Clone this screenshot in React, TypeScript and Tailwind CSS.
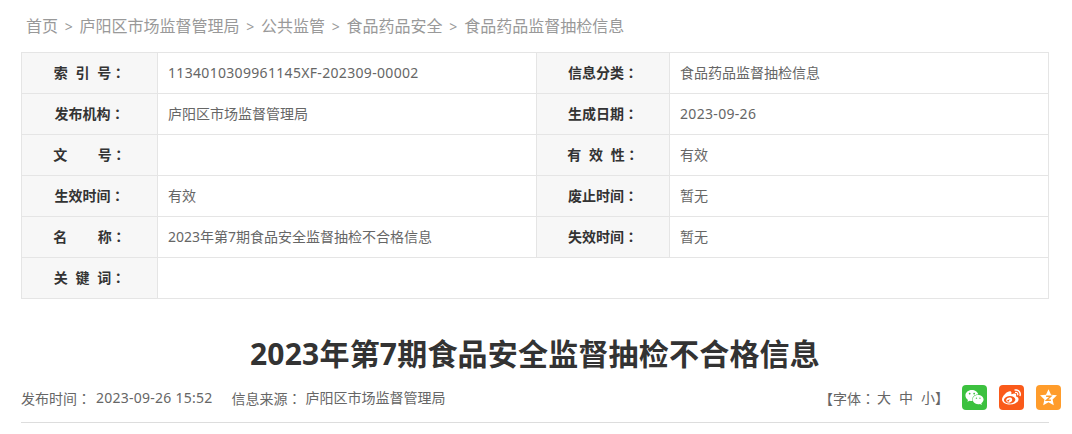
import { FaWeibo, FaWeixin } from 'react-icons/fa';

const crumbs = ['首页', '庐阳区市场监督管理局', '公共监管', '食品药品安全', '食品药品监督抽检信息'];

const rows: [string, string, string?, string?][] = [
  ['索 引 号', '1134010309961145XF-202309-00002', '信息分类', '食品药品监督抽检信息'],
  ['发布机构', '庐阳区市场监督管理局', '生成日期', '2023-09-26'],
  ['文\u00a0\u00a0\u00a0\u00a0号', '', '有 效 性', '有效'],
  ['生效时间', '有效', '废止时间', '暂无'],
  ['名\u00a0\u00a0\u00a0\u00a0称', '2023年第7期食品安全监督抽检不合格信息', '失效时间', '暂无'],
  ['关 键 词', ''],
];

function Colon() {
  return <span className="font-['Noto_Sans_CJK_TC',sans-serif]">：</span>;
}

function Label({ text }: { text: string }) {
  return (
    <td className="h-[41px] border border-[#e5e5e5] bg-[#f7f7f7] p-0 pb-[2px] text-center text-[14px] font-bold text-[#333] [word-spacing:4px]">
      {text}
      <Colon />
    </td>
  );
}

function Value({ text, wide }: { text?: string; wide?: boolean }) {
  // plain digit strings run a little wider in the original
  const digits = !!text && /^[0-9A-Z-]+$/.test(text);
  return (
    <td
      colSpan={wide ? 3 : undefined}
      className={`border border-[#e5e5e5] px-[10px] pt-0 pb-[2px] text-[14px] ${digits ? 'tracking-[0.32px]' : ''}`}
    >
      {text}
    </td>
  );
}

export default function App() {
  return (
    <div className="h-[434px] w-[1072px] overflow-hidden bg-white font-['Noto_Sans','Noto_Sans_CJK_SC',sans-serif] text-[#666]">
      <div className="flex h-[52px] items-center gap-[6.75px] pl-[26px] text-[16px] text-[#999]">
        {crumbs.map((c, i) => (
          <span key={c} className="flex items-center gap-[6.75px]">
            {i > 0 && <span className="text-[14px]">&gt;</span>}
            {c}
          </span>
        ))}
      </div>

      <div className="ml-[21px] w-[1028px]">
        <table className="w-[1028px] table-fixed border-collapse border border-[#e5e5e5]">
          <colgroup>
            <col className="w-[136px]" />
            <col className="w-[379px]" />
            <col className="w-[133px]" />
            <col />
          </colgroup>
          <tbody>
            {rows.map((r) => (
              <tr key={r[0]}>
                <Label text={r[0]} />
                {r[2] ? (
                  <>
                    <Value text={r[1]} />
                    <Label text={r[2]} />
                    <Value text={r[3]} />
                  </>
                ) : (
                  <Value text={r[1]} wide />
                )}
              </tr>
            ))}
          </tbody>
        </table>

        <h1 className="mt-[32px] text-center text-[30px] leading-[46px] font-bold tracking-[0.2px] text-[#333]">
          2023年第7期食品安全监督抽检不合格信息
        </h1>

        <div className="mt-[8px] flex h-[38px] items-start justify-between border-b border-[#dddddd]">
          <div className="flex pt-[3px] text-[14px] leading-[20px]">
            <span>发布时间<Colon /></span>
            <span className="ml-[5px] tracking-[0.25px]">2023-09-26 15:52</span>
            <span className="ml-[19px]">信息来源<Colon /></span>
            <span className="ml-[4px]">庐阳区市场监督管理局</span>
          </div>
          <div className="flex items-start">
            <div className="flex gap-[8px] pt-[3px] text-[14px] leading-[20px]">
              <span>【字体<Colon /></span>
              <span className="ml-[-6px]">大</span>
              <span>中</span>
              <span>小】</span>
            </div>
            <div className="mr-[-12px] ml-[13px] flex gap-[12px]">
              <span className="flex h-[25px] w-[25px] items-center justify-center rounded-[4px] bg-[#3cc13f] text-white">
                <FaWeixin size={19} />
              </span>
              <span className="flex h-[25px] w-[25px] items-center justify-center rounded-[4px] bg-[#fa5a1a] text-white">
                <FaWeibo size={19} />
              </span>
              <span className="flex h-[25px] w-[25px] items-center justify-center rounded-[4px] bg-[#ff9c2b]">
                <svg width="19" height="19" viewBox="0 0 24 24">
                  <path
                    d="M12 1.5l3.2 6.9 7.5.9-5.5 5.1 1.5 7.4L12 18.1l-6.7 3.7 1.5-7.4-5.5-5.1 7.5-.9z"
                    fill="#fff"
                  />
                  <path d="M9 10.5h6L9.5 15.5H15" fill="none" stroke="#ff9c2b" strokeWidth="1.8" />
                </svg>
              </span>
            </div>
          </div>
        </div>
      </div>
    </div>
  );
}
